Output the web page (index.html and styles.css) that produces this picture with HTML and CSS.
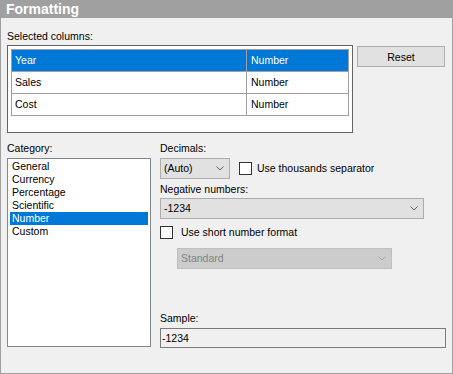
FILE: index.html
```html
<!DOCTYPE html>
<html lang="en">
<head>
    <meta charset="UTF-8">
    <title>Formatting</title>
    <link rel="stylesheet" href="styles.css">
</head>
<body>
    <div class="panel">
        <div class="title">Formatting</div>
        <div class="content">
            <div class="label first">Selected columns:</div>
            <div class="top-row">
                <div class="columns-box">
                    <div class="grid">
                        <div class="grid-row selected">
                            <div class="cell name">Year</div>
                            <div class="cell type">Number</div>
                        </div>
                        <div class="grid-row">
                            <div class="cell name">Sales</div>
                            <div class="cell type">Number</div>
                        </div>
                        <div class="grid-row">
                            <div class="cell name">Cost</div>
                            <div class="cell type">Number</div>
                        </div>
                    </div>
                </div>
                <button class="reset">Reset</button>
            </div>

            <div class="bottom-row">
                <div class="category">
                    <div class="label">Category:</div>
                    <div class="listbox">
                        <div class="item">General</div>
                        <div class="item">Currency</div>
                        <div class="item">Percentage</div>
                        <div class="item">Scientific</div>
                        <div class="item selected">Number</div>
                        <div class="item">Custom</div>
                    </div>
                </div>

                <div class="options">
                    <div class="label">Decimals:</div>
                    <div class="decimals-row">
                        <div class="combo decimals">
                            <span>(Auto)</span>
                            <svg class="chevron" width="8" height="5" viewBox="0 0 8 5"><polyline points="0.5,0.5 4,4 7.5,0.5" fill="none" stroke="#606060" stroke-width="1"/></svg>
                        </div>
                        <label class="check thousands"><span class="box"></span>Use thousands separator</label>
                    </div>

                    <div class="label negative-label">Negative numbers:</div>
                    <div class="combo negative">
                        <span>-1234</span>
                        <svg class="chevron" width="8" height="5" viewBox="0 0 8 5"><polyline points="0.5,0.5 4,4 7.5,0.5" fill="none" stroke="#606060" stroke-width="1"/></svg>
                    </div>

                    <label class="check short"><span class="box"></span>Use short number format</label>

                    <div class="combo standard disabled">
                        <span>Standard</span>
                        <svg class="chevron" width="8" height="5" viewBox="0 0 8 5"><polyline points="0.5,0.5 4,4 7.5,0.5" fill="none" stroke="#a8a8a8" stroke-width="1"/></svg>
                    </div>

                    <div class="label sample-label">Sample:</div>
                    <div class="sample">-1234</div>
                </div>
            </div>
        </div>
    </div>
</body>
</html>
```

FILE: styles.css
```css
* {
    box-sizing: border-box;
    margin: 0;
    padding: 0;
}
body {
    font-family: "Liberation Sans", Arial, sans-serif;
    font-size: 10.5px;
    line-height: 13px;
    color: #000;
    background: #f0f0f0;
}
.panel {
    width: 453px;
    height: 374px;
    background: #f0f0f0;
    border: 1px solid #a0a0a0;
    border-top: none;
}
.title {
    height: 18px;
    margin: 0 -1px;
    padding-left: 6px;
    background: #a0a0a0;
    color: #fff;
    font-weight: bold;
    font-size: 14px;
    line-height: 19px;
}
.content {
    padding: 0 6px;
}
.label {
    height: 13px;
}
.label.first {
    margin-top: 12px;
    margin-bottom: 2px;
}
.top-row {
    display: flex;
    align-items: flex-start;
}
.columns-box {
    width: 346px;
    height: 88px;
    border: 1px solid #646464;
    background: #fff;
    padding: 3px;
}
.grid {
    border: 1px solid #a0a0a0;
    border-bottom: none;
}
.grid-row {
    display: flex;
    height: 22px;
    border-bottom: 1px solid #a0a0a0;
}
.grid-row.selected {
    background: #0078d7;
    color: #fff;
}
.cell {
    line-height: 21px;
}
.cell.name {
    width: 235px;
    padding-left: 3px;
    border-right: 1px solid #a0a0a0;
}
.cell.type {
    flex: 1;
    padding-left: 4px;
}
.reset {
    width: 88px;
    height: 21px;
    margin: 1px 0 0 4px;
    border: 1px solid #adadad;
    background: #e1e1e1;
    font-family: inherit;
    font-size: 10.5px;
    color: #000;
}
.bottom-row {
    display: flex;
    margin-top: 9px;
}
.category {
    width: 144px;
}
.category .label {
    margin-bottom: 3px;
}
.listbox {
    height: 189px;
    border: 1px solid #828790;
    background: #fff;
    padding: 1px 2px;
}
.item {
    height: 13px;
    padding-left: 2px;
}
.item.selected {
    background: #0078d7;
    color: #fff;
}
.options {
    margin-left: 9px;
}
.options > .label:first-child {
    margin-bottom: 3px;
}
.decimals-row {
    display: flex;
    align-items: center;
}
.combo {
    display: flex;
    align-items: center;
    justify-content: space-between;
    height: 21px;
    border: 1px solid #adadad;
    background: #e1e1e1;
    padding: 0 5px 0 3px;
}
.combo.decimals {
    width: 70px;
}
.combo.negative {
    width: 264px;
}
.combo.standard {
    width: 215px;
    margin: 9px 0 0 17px;
}
.combo.disabled {
    background: #cccccc;
    border-color: #bfbfbf;
    color: #838383;
}
.chevron {
    display: block;
}
.check {
    display: flex;
    align-items: center;
    height: 13px;
}
.check .box {
    width: 13px;
    height: 13px;
    border: 1px solid #333;
    background: #fff;
    margin-right: 5px;
}
.check.thousands {
    margin-left: 9px;
}
.check.short {
    margin-top: 7px;
}
.check.short .box {
    margin-right: 8px;
}
.negative-label {
    margin-top: 4px;
    margin-bottom: 2px;
}
.sample-label {
    margin-top: 43px;
    margin-bottom: 3px;
}
.sample {
    width: 286px;
    height: 20px;
    border: 1px solid #7a7a7a;
    background: #f0f0f0;
    padding-left: 1px;
    line-height: 18px;
}
```
